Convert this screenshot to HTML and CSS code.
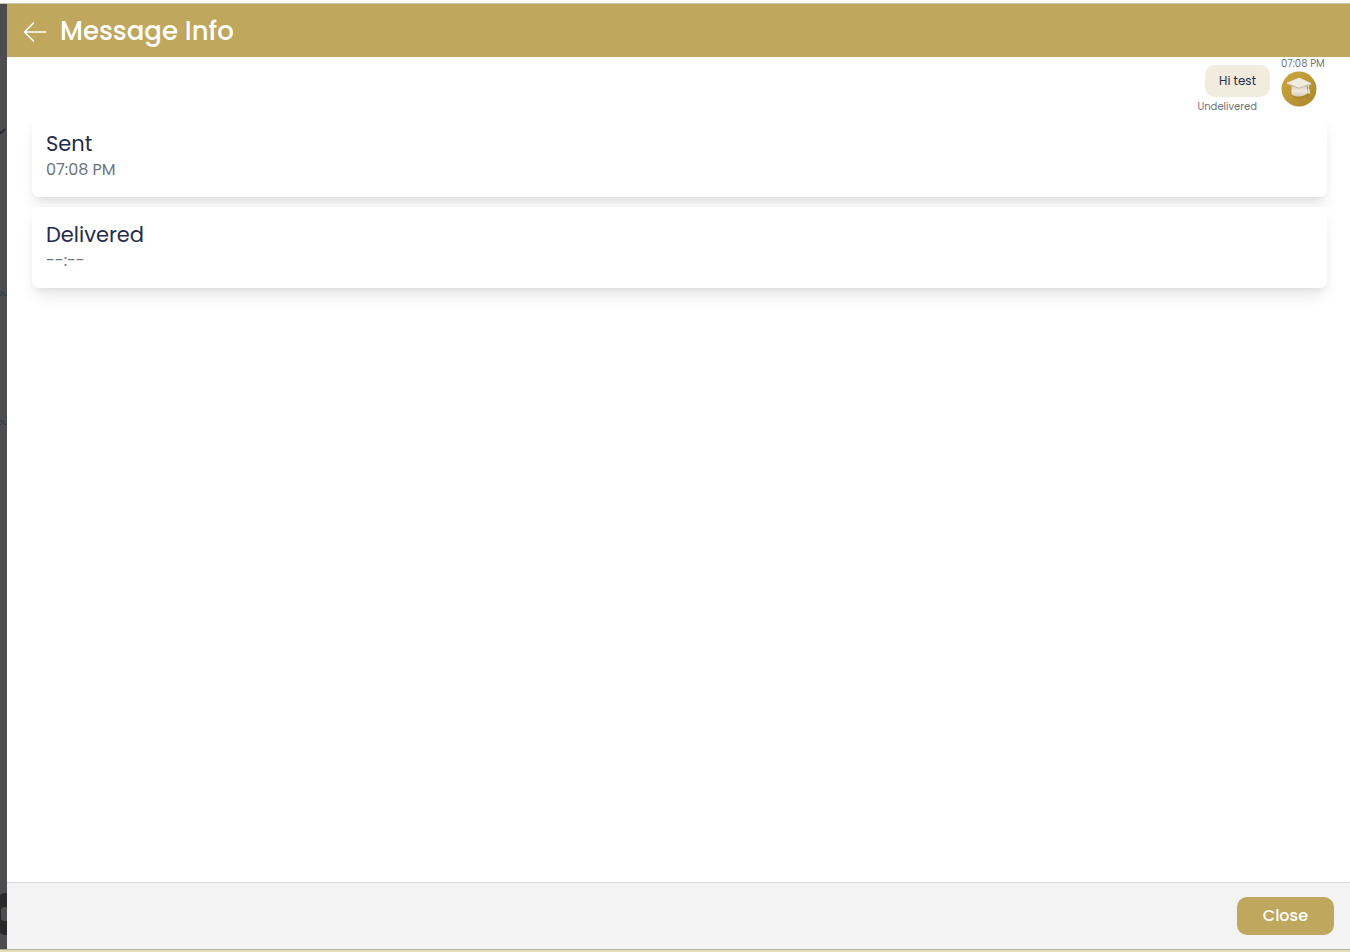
FILE: index.html
```html
<!DOCTYPE html>
<html lang="en">
<head>
<meta charset="utf-8">
<title>Message Info</title>
<meta name="viewport" content="width=device-width, initial-scale=1">
<link rel="stylesheet" href="styles.css">
</head>
<body>
<div class="app">
  <div class="backdrop" aria-hidden="true">
    <svg class="tick" width="7" height="10" viewBox="0 0 7 10"><path d="M-1 4L1 6L5 2" fill="none" stroke="#202330" stroke-width="1.6"/></svg>
    <span class="peek peek-first">ou</span>
    <span class="peek peek-second">ou</span>
    <svg class="knob" width="7" height="42" viewBox="0 0 7 42"><circle cx="13" cy="21" r="23" fill="#29292b"/><rect x="1" y="14" width="16" height="14" rx="3" fill="#4d4d4f"/></svg>
  </div>
  <section class="panel">
    <header class="header">
      <button class="back" type="button" aria-label="Back">
        <svg width="24" height="22" viewBox="0 0 24 22" fill="none" stroke="#fff" stroke-width="1.6" stroke-linecap="round" stroke-linejoin="round"><path d="M22.500 11H1.500M10.500 2L1.500 11L10.500 20"/></svg>
      </button>
      <h1 class="title">Message Info</h1>
    </header>
    <main class="content">
      <div class="message">
        <div class="message-body">
          <p class="bubble">Hi test</p>
          <span class="status">Undelivered</span>
        </div>
        <div class="sender">
          <time class="time">07:08 PM</time>
          <svg class="avatar" width="36" height="36" viewBox="0 0 36 36" role="img" aria-label="Graduation cap">
            <defs>
              <linearGradient id="gold" x1="0" y1="0" x2="1" y2="1"><stop offset="0" stop-color="#c9a840"/><stop offset="1" stop-color="#ad872b"/></linearGradient>
              <linearGradient id="cap" x1="0" y1="0" x2="0" y2="1"><stop offset="0" stop-color="#d9d0bf"/><stop offset=".5" stop-color="#efe9dc"/><stop offset="1" stop-color="#d5cab5"/></linearGradient>
            </defs>
            <circle cx="18" cy="18" r="17.500" fill="url(#gold)"/>
            <path d="M12 26C16 29 25 28 29 24L29 19L12 19Z" fill="#9b7926" opacity=".5"/>
            <path d="M10.500 15V23C13 26.500 23 26.500 26 22.500V15Z" fill="url(#cap)"/>
            <path d="M6 12.500L18 16.500L30 13V14L18 17.500L6 13.500Z" fill="#c3b79f"/>
            <path d="M6 12L17 7.500Q18 7 19 7.300L30 12.500L18 16.300Z" fill="#f2ede2" stroke="#ece5d8" stroke-width=".8" stroke-linejoin="round"/>
            <path d="M27.500 13.500V19" fill="none" stroke="#e0d7c6"/>
            <path d="M26.500 18H28.500L29.300 22.500H26Z" fill="#e8e0cf"/>
          </svg>
        </div>
      </div>
      <article class="card">
        <h2 class="card-title">Sent</h2>
        <p class="card-value">07:08 PM</p>
      </article>
      <article class="card">
        <h2 class="card-title">Delivered</h2>
        <p class="card-value">--:--</p>
      </article>
    </main>
    <footer class="footer">
      <button class="close" type="button">Close</button>
    </footer>
  </section>
</div>
</body>
</html>
```
FILE: styles.css
```css
* { box-sizing: border-box; margin: 0; }

body {
  background: #fff;
  color: #252c4b;
  font-family: Poppins, Inter, "Open Sans", sans-serif;
}

.app {
  display: flex;
  min-height: 100vh;
  padding-top: 3px;
  border-bottom: 2px solid #e2dfb6;
}

.backdrop {
  position: relative;
  width: 7px;
  flex-shrink: 0;
  overflow: hidden;
  background: #4d4d4f;
  border-top: 1px solid #c9c4b4;
  border-bottom: 1px solid #a9a99c;
}

.tick { position: absolute; left: 0; top: 123px; }
.peek { position: absolute; left: -3px; color: #313949; font-size: 9px; line-height: 12px; }
.peek-first { top: 283px; }
.peek-second { top: 412px; }
.knob { position: absolute; left: 0; bottom: 14px; }

.panel {
  display: flex;
  flex: 1;
  flex-direction: column;
  min-width: 0;
  border-top: 1px solid #c9c4b4;
  border-bottom: 1px solid #b5b5a8;
}

.header {
  display: flex;
  align-items: center;
  gap: 13px;
  padding: 7px 16px 5px;
  background: #bfa75d;
  color: #fff;
}

.back {
  display: flex;
  padding: 1px 0 0;
  border: 0;
  background: none;
}

.title { font-size: 26px; font-weight: 500; line-height: 41px; }

.content { flex: 1; padding: 0 23px 0 25px; }

.message {
  display: flex;
  justify-content: flex-end;
  gap: 11px;
  margin-bottom: 1px;
}

.message-body {
  display: flex;
  flex-direction: column;
  align-items: flex-end;
  padding-top: 8px;
}

.bubble {
  padding: 6px 14px;
  border-radius: 10px;
  background: #f2ecdf;
  font-size: 12px;
  line-height: 20px;
}

.status {
  margin-right: 13px;
  padding-top: 2px;
  color: #6c757d;
  font-size: 10px;
  line-height: 16px;
}

.sender {
  display: flex;
  flex-direction: column;
  min-width: 46px;
}

.time { color: #6c757d; font-size: 10px; line-height: 14px; }
.avatar { display: block; }

.card {
  margin-bottom: 10px;
  padding: 13px 14px 15px;
  border-radius: 7px;
  background: #fff;
  box-shadow: 0 10px 15px -3px rgba(0, 0, 0, .1), 0 4px 6px -2px rgba(0, 0, 0, .05);
}

.card-title { font-size: 21px; font-weight: 400; line-height: 29px; }
.card-value { color: #6c757d; font-size: 16px; line-height: 24px; }

.footer {
  display: flex;
  justify-content: flex-end;
  padding: 14px 16px;
  border-top: 1px solid #d9d9d9;
  background: #f3f3f3;
}

.close {
  padding: 7px 26px;
  border: 0;
  border-radius: 10px;
  background: #bfa75d;
  color: #fff;
  font: inherit;
  font-size: 16px;
  font-weight: 500;
  line-height: 24px;
}
```
